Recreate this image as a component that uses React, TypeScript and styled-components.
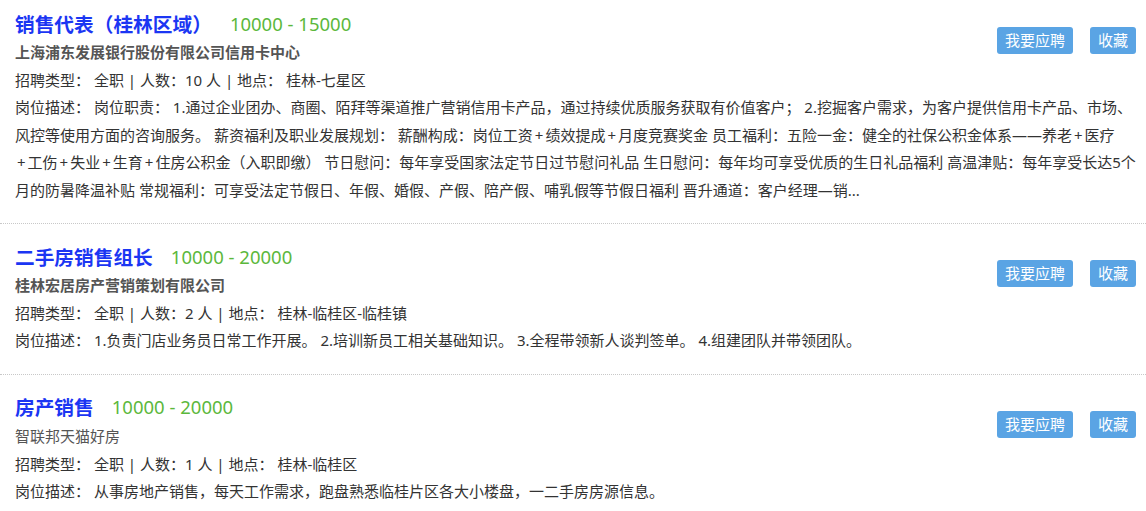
import React from 'react';
import styled, { createGlobalStyle } from 'styled-components';

const GlobalStyle = createGlobalStyle`
  html, body {
    margin: 0;
    padding: 0;
    background: #fff;
  }
  body {
    font-family: "Noto Sans", "Noto Sans CJK SC", sans-serif;
    color: #333;
  }
`;

const JobList = styled.ul`
  list-style: none;
  margin: 0;
  padding: 0;
  width: 1146px;
`;

const JobItem = styled.li`
  padding: 17px 4px 19px 15px;
  border-bottom: 1px dotted #c8c8c8;

  &:first-child {
    padding-top: 8px;
  }

  &:last-child {
    border-bottom: none;
  }

  &::after {
    content: '';
    display: block;
    clear: both;
  }
`;

const Actions = styled.div`
  float: right;
  display: flex;
  gap: 17px;
  margin: 19px 6px 0 20px;
`;

const ActionButton = styled.button`
  height: 27px;
  padding: 0 8px;
  border: none;
  border-radius: 3px;
  background: #5aa4e4;
  color: #fff;
  font-family: inherit;
  font-size: 15px;
  line-height: 27px;
  cursor: pointer;
`;

const TitleRow = styled.div`
  display: flex;
  align-items: center;
  height: 30px;
`;

const JobTitle = styled.a`
  font-size: 19.7px;
  font-weight: bold;
  color: #1b36f3;
  text-decoration: none;
`;

const Salary = styled.span`
  margin-left: 18px;
  font-size: 18.5px;
  color: #5cb83c;
`;

const Company = styled.div<{ bold?: boolean }>`
  font-size: 15px;
  line-height: 28px;
  font-weight: ${({ bold }) => (bold ? 'bold' : 'normal')};
  color: #555;
`;

const Meta = styled.div`
  font-size: 15px;
  line-height: 28px;
  color: #333;
`;

const Description = styled.p`
  margin: 0;
  font-size: 15px;
  line-height: 27.5px;
  color: #333;
`;

// plus signs are a little wider in the original font
const Plus = styled.span`
  margin: 0 2px;
`;

type Job = {
  title: string;
  salary: string;
  company: string;
  boldCompany: boolean;
  count: number;
  location: string;
  description: string;
};

const jobs: Job[] = [
  {
    title: '销售代表（桂林区域）',
    salary: '10000 - 15000',
    company: '上海浦东发展银行股份有限公司信用卡中心',
    boldCompany: true,
    count: 10,
    location: '桂林-七星区',
    description:
      '岗位描述： 岗位职责： 1.通过企业团办、商圈、陌拜等渠道推广营销信用卡产品，通过持续优质服务获取有价值客户； 2.挖掘客户需求，为客户提供信用卡产品、市场、风控等使用方面的咨询服务。 薪资福利及职业发展规划： 薪酬构成：岗位工资+绩效提成+月度竞赛奖金 员工福利：五险一金：健全的社保公积金体系——养老+医疗+工伤+失业+生育+住房公积金（入职即缴） 节日慰问：每年享受国家法定节日过节慰问礼品 生日慰问：每年均可享受优质的生日礼品福利 高温津贴：每年享受长达5个月的防暑降温补贴 常规福利：可享受法定节假日、年假、婚假、产假、陪产假、哺乳假等节假日福利 晋升通道：客户经理—销...',
  },
  {
    title: '二手房销售组长',
    salary: '10000 - 20000',
    company: '桂林宏居房产营销策划有限公司',
    boldCompany: true,
    count: 2,
    location: '桂林-临桂区-临桂镇',
    description:
      '岗位描述： 1.负责门店业务员日常工作开展。 2.培训新员工相关基础知识。 3.全程带领新人谈判签单。 4.组建团队并带领团队。',
  },
  {
    title: '房产销售',
    salary: '10000 - 20000',
    company: '智联邦天猫好房',
    boldCompany: false,
    count: 1,
    location: '桂林-临桂区',
    description:
      '岗位描述： 从事房地产销售，每天工作需求，跑盘熟悉临桂片区各大小楼盘，一二手房房源信息。',
  },
];

const renderDescription = (text: string) =>
  text.split('+').map((part, i) => (
    <React.Fragment key={i}>
      {i > 0 && <Plus>+</Plus>}
      {part}
    </React.Fragment>
  ));

export default function App() {
  return (
    <>
      <GlobalStyle />
      <JobList>
        {jobs.map((job) => (
          <JobItem key={job.title}>
            <Actions>
              <ActionButton>我要应聘</ActionButton>
              <ActionButton>收藏</ActionButton>
            </Actions>
            <TitleRow>
              <JobTitle href="#">{job.title}</JobTitle>
              <Salary>{job.salary}</Salary>
            </TitleRow>
            <Company bold={job.boldCompany}>{job.company}</Company>
            <Meta>
              招聘类型： 全职 | 人数：{job.count} 人 | 地点： {job.location}
            </Meta>
            <Description>{renderDescription(job.description)}</Description>
          </JobItem>
        ))}
      </JobList>
    </>
  );
}
